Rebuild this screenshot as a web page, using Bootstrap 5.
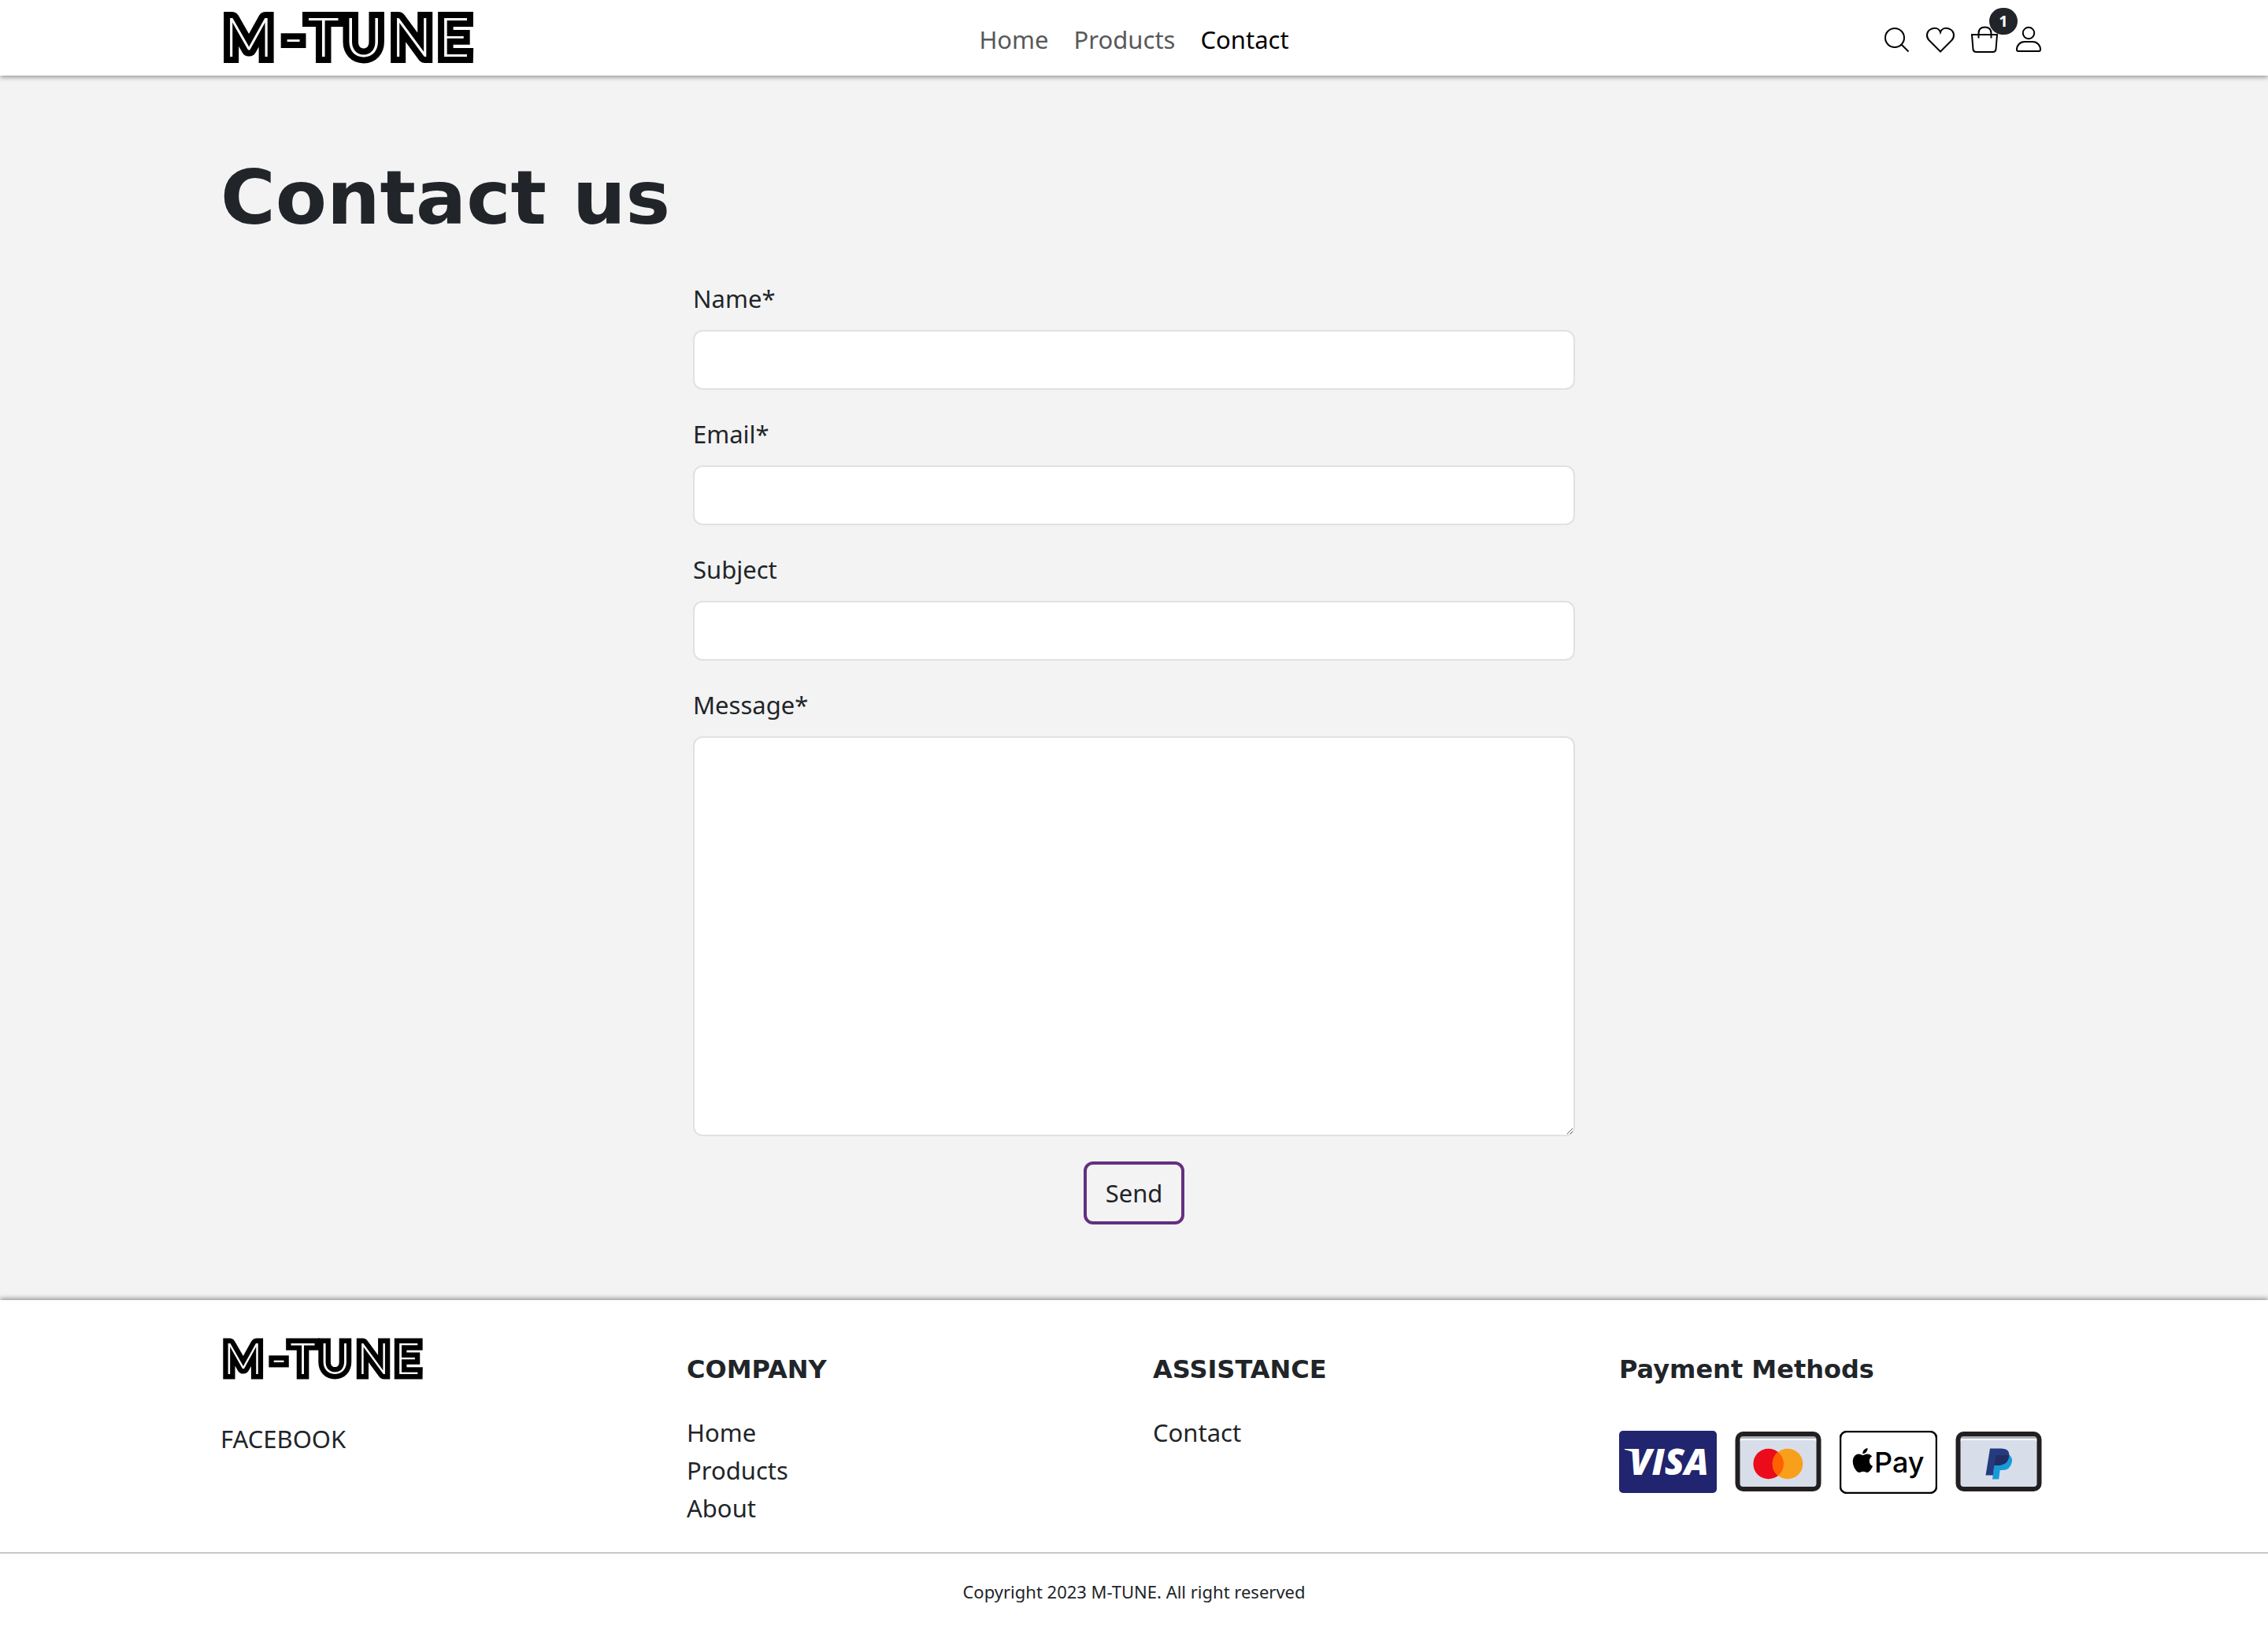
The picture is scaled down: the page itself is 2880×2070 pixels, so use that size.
<!DOCTYPE html>
<html lang="en">
<head>
<meta charset="utf-8">
<meta name="viewport" content="width=device-width, initial-scale=1">
<title>M-TUNE - Contact</title>
<link href="https://cdn.jsdelivr.net/npm/bootstrap@5.3.0/dist/css/bootstrap.min.css" rel="stylesheet">
<style>
  body { font: 400 31px/48px "Noto Sans", sans-serif; color: #212529; background: #f3f3f3; }
  a { color: inherit; text-decoration: none; }
  svg { display: block; }
  .page-width { max-width: 2368px; padding-left: 24px; padding-right: 24px; }
  .site-header { padding: 0; background: #fff; box-shadow: 0 2px 6px rgba(0,0,0,.4); z-index: 2; }
  .header-side { flex: 1 1 0; }
  .brand-svg { width: 320px; height: 96px; overflow: visible; }
  .site-header .nav-link { padding: 4px 16px 0; color: #595959; }
  .site-header .nav-link.active { color: #000; }
  .icon-row { gap: 8px; padding-top: 4px; }
  .icon-slot { width: 48px; height: 40px; padding: 0 4px; color: #000; background: none; border: 0; }
  .line-icon { width: 40px; height: 40px; fill: none; stroke: #000; stroke-width: 2; }
  .cart-count { top: -20px; right: -18px; width: 36px; height: 34px; background: #212529; font: 700 20px/34px "Noto Sans", sans-serif; color: #fff; border-radius: 18px; text-align: center; }
  .heading-font { font-family: "DejaVu Sans", sans-serif; font-weight: 700; }
  .page-main { padding-top: 96px; padding-bottom: 96px; }
  .page-title { font-size: 95px; line-height: 119px; margin-bottom: 44px; }
  .contact-form { max-width: 1120px; }
  .form-label { margin-bottom: 16px; }
  .form-control { font-size: 31px; line-height: 48px; padding: 12px 24px; border: 2px solid #dee2e6; border-radius: 12px; }
  .field { margin-bottom: 32px; }
  textarea.message-box { height: 508px; }
  .send-btn { font-size: 31px; line-height: 48px; padding: 12px 24px; border: 4px solid #63307f; border-radius: 12px; color: #212529; }
  .site-footer { background: #fff; box-shadow: 0 -2px 6px rgba(0,0,0,.4); }
  .footer-row { --bs-gutter-x: 48px; padding-top: 48px; padding-bottom: 32px; }
  .footer-brand { width: 256px; height: 56px; margin-bottom: 48px; overflow: visible; }
  .footer-title { font-size: 32px; line-height: 40px; padding-top: 20px; margin-bottom: 36px; }
  .pay-list { gap: 16px; padding-top: 22px; }
  .pay-card { width: 124px; height: 80px; }
  .copyright { border-top: 2px solid #c8c8c8; padding: 32px 0; font-size: 22px; line-height: 33px; }
  .logo-text { font: 300 68px Lato, sans-serif; fill: #fff; stroke: #000; stroke-width: 16px; stroke-linejoin: miter; stroke-miterlimit: 2; paint-order: stroke; }
</style>
<script src="https://cdn.jsdelivr.net/npm/bootstrap@5.3.0/dist/js/bootstrap.bundle.min.js"></script>
</head>
<body class="d-flex flex-column min-vh-100">
<header class="site-header position-relative">
  <div class="container-fluid page-width d-flex align-items-center">
    <div class="header-side">
      <a href="#" class="d-inline-block align-top" aria-label="M-TUNE home">
        <svg class="brand-svg" viewBox="0 0 320 96"><text class="logo-text" y="72" x="5 80 111 157 217 277">M-TUNE</text></svg>
      </a>
    </div>
    <nav><ul class="nav">
      <li><a class="nav-link" href="#">Home</a></li>
      <li><a class="nav-link" href="#">Products</a></li>
      <li><a class="nav-link active" aria-current="page" href="#">Contact</a></li>
    </ul></nav>
    <div class="header-side d-flex justify-content-end icon-row">
      <button class="icon-slot" type="button" aria-label="Search"><svg class="line-icon" viewBox="0 0 40 40"><circle cx="18" cy="18" r="12"/><path d="M26.5 26.5l9 9"/></svg></button>
      <a class="icon-slot" href="#" aria-label="Favourites"><svg class="line-icon" viewBox="0 0 40 40"><path d="M20 35.5L5.5 21C1.500 16.500 2.500 10 7 7.500C11.500 4.500 18 5 20 11C22 5 28.500 4.500 33 7.500C37.500 10 38.500 16.500 34.500 21Z"/></svg></a>
      <a class="icon-slot position-relative" href="#" aria-label="Cart"><svg class="line-icon" viewBox="0 0 40 40"><path d="M4 14h32l-1.500 18.500q-.5 3.500-4 3.500h-21q-3.500 0-4-3.500zM12.500 18.500v-6q0-8 8-8t8 8v6"/></svg><span class="cart-count position-absolute">1</span></a>
      <a class="icon-slot" href="#" aria-label="Account"><svg class="line-icon" viewBox="0 0 40 40"><circle cx="20" cy="12" r="7.200"/><path d="M15 23h10c6 0 10 4.500 10 10q0 2-2 2H7q-2 0-2-2c0-5.500 4-10 10-10z"/></svg></a>
    </div>
  </div>
</header>

<main class="page-main">
  <div class="container-fluid page-width">
    <h1 class="page-title heading-font">Contact us</h1>
    <form class="contact-form mx-auto">
      <div class="field"><label class="form-label d-block" for="name">Name*</label><input class="form-control" id="name" type="text" required></div>
      <div class="field"><label class="form-label d-block" for="email">Email*</label><input class="form-control" id="email" type="email" required></div>
      <div class="field"><label class="form-label d-block" for="subject">Subject</label><input class="form-control" id="subject" type="text"></div>
      <div class="field"><label class="form-label d-block" for="message">Message*</label><textarea class="form-control d-block message-box" id="message" required></textarea></div>
      <button class="btn send-btn d-block mx-auto" type="submit">Send</button>
    </form>
  </div>
</main>

<footer class="site-footer flex-grow-1">
  <div class="container-fluid page-width">
    <div class="row footer-row">
      <div class="col-3">
        <svg class="footer-brand" viewBox="0 14 320 70" role="img" aria-label="M-TUNE"><text class="logo-text" y="72" x="5 80 111 157 217 277">M-TUNE</text></svg>
        <a href="#">FACEBOOK</a>
      </div>
      <div class="col-3">
        <h2 class="footer-title heading-font">COMPANY</h2>
        <ul class="list-unstyled mb-0">
          <li><a href="#">Home</a></li>
          <li><a href="#">Products</a></li>
          <li><a href="#">About</a></li>
        </ul>
      </div>
      <div class="col-3">
        <h2 class="footer-title heading-font">ASSISTANCE</h2>
        <ul class="list-unstyled mb-0"><li><a href="#">Contact</a></li></ul>
      </div>
      <div class="col-3">
        <h2 class="footer-title heading-font">Payment Methods</h2>
        <div class="d-flex pay-list">
          <svg class="pay-card" viewBox="0 0 124 80" role="img" aria-label="Visa"><rect width="124" height="79" rx="5" fill="#21246e"/><text x="13" y="56" font-family="Open Sans, sans-serif" font-weight="800" font-style="italic" font-size="46" fill="#fff">VISA</text><path d="M7 23h14l3 8q-6-5-17-7z" fill="#fff"/></svg>
          <svg class="pay-card" viewBox="0 0 124 80" role="img" aria-label="Mastercard"><rect x="10.500" y="4" width="103" height="70" rx="7" fill="#d7dee9"/><path d="M12 5h100v8q0-3-3-3H15q-3 0-3 3z" fill="#a9b1bc"/><path d="M13 14q0-3 3-3h92q3 0 3 3" fill="none" stroke="#fff" stroke-width="2"/><rect x="10.500" y="4" width="103" height="70" rx="7" fill="none" stroke="#231f20" stroke-width="6"/><circle cx="49.700" cy="42" r="19.300" fill="#eb0b1a"/><circle cx="74" cy="42" r="19.300" fill="#f8a01c"/><path d="M61.850 27a19.300 19.300 0 0 1 0 30a19.300 19.300 0 0 1 0-30z" fill="#ff6000"/></svg>
          <svg class="pay-card" viewBox="0 0 124 80" role="img" aria-label="Apple Pay"><rect x="1" y="1" width="122" height="78" rx="8" fill="#fff" stroke="#000" stroke-width="2.500"/><path transform="translate(13.900 22) scale(1.290)" d="M12.152 6.896c-.948 0-2.415-1.078-3.960-1.040-2.040.027-3.910 1.183-4.961 3.014-2.117 3.675-.546 9.103 1.519 12.090 1.013 1.454 2.208 3.090 3.792 3.039 1.520-.065 2.090-.987 3.935-.987 1.831 0 2.350.987 3.960.948 1.637-.026 2.676-1.480 3.676-2.948 1.156-1.688 1.636-3.325 1.662-3.415-.039-.013-3.182-1.221-3.220-4.857-.026-3.040 2.480-4.494 2.597-4.559-1.429-2.090-3.623-2.324-4.390-2.376-2-.156-3.675 1.090-4.610 1.090zM15.530 3.830c.843-1.012 1.400-2.427 1.245-3.830-1.207.052-2.662.805-3.532 1.818-.780.896-1.454 2.338-1.273 3.714 1.338.104 2.715-.688 3.559-1.701"/><text x="44" y="53" font-family="Inter, sans-serif" font-weight="500" font-size="36">Pay</text></svg>
          <svg class="pay-card" viewBox="0 0 124 80" role="img" aria-label="PayPal"><rect x="10.500" y="4" width="103" height="70" rx="7" fill="#d7dee9"/><path d="M12 5h100v8q0-3-3-3H15q-3 0-3 3z" fill="#a9b1bc"/><path d="M13 14q0-3 3-3h92q3 0 3 3" fill="none" stroke="#fff" stroke-width="2"/><rect x="10.500" y="4" width="103" height="70" rx="7" fill="none" stroke="#231f20" stroke-width="6"/><path d="M58 31h17.500q4.500 3 3.200 9q-2 10-12 10h-3l-1.500 11.500h-8.200z" fill="#179bd7"/><path d="M51 22.500h14q11 0 10.500 9q-1 12-14 12.500h-5l-1.700 12.500h-9.300z" fill="#253b80"/><path d="M58.500 31h16.800q-1.500 12.500-13.800 13h-5z" fill="#222d65"/></svg>
        </div>
      </div>
    </div>
  </div>
  <div class="copyright text-center">Copyright 2023 M-TUNE. All right reserved</div>
</footer>
</body>
</html>
